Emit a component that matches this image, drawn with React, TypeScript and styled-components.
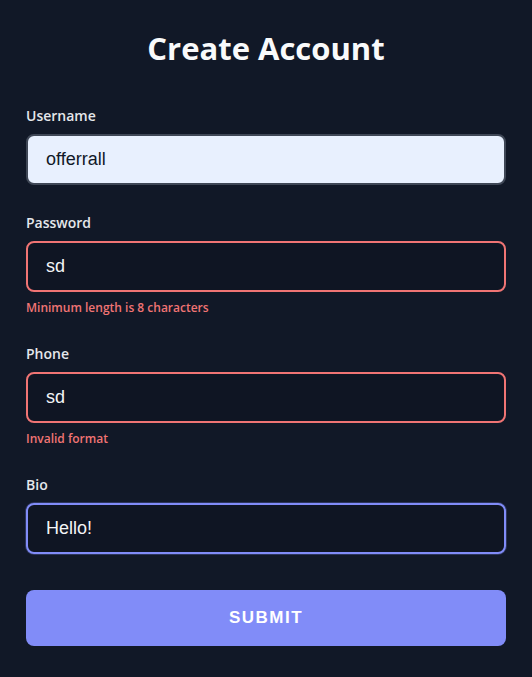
import React from 'react'
import styled, { createGlobalStyle } from 'styled-components'

const GlobalStyle = createGlobalStyle`
  html, body {
    margin: 0;
    padding: 0;
    background: #111827;
  }
  * {
    box-sizing: border-box;
  }
`

const Page = styled.div`
  display: flex;
  flex-direction: column;
  min-height: 677px;
  padding: 0 26px;
  background: #111827;
  font-family: 'Open Sans', 'Noto Sans', sans-serif;
`

const Title = styled.h1`
  margin: 28px 0 38px;
  color: #f9fafb;
  font-size: 31px;
  font-weight: 700;
  line-height: 40px;
  text-align: center;
`

const Form = styled.form`
  display: flex;
  flex-direction: column;
`

const Field = styled.div`
  display: flex;
  flex-direction: column;
  margin-bottom: 28px;
`

const Label = styled.label`
  margin-bottom: 8px;
  color: #e5e7eb;
  font-size: 14px;
  font-weight: 600;
  line-height: 20px;
`

const Input = styled.input<{ $state?: 'filled' | 'error' | 'focus' }>`
  width: 100%;
  height: 51px;
  padding: 0 18px;
  color: ${({ $state }) => ($state === 'filled' ? '#111827' : '#f3f4f6')};
  font-family: 'Liberation Sans', Arial, sans-serif;
  font-size: 18px;
  background: ${({ $state }) => ($state === 'filled' ? '#e8f0fe' : '#0f1523')};
  border: 2px solid
    ${({ $state }) =>
      $state === 'error' ? '#f07474' : $state === 'focus' ? '#818cf8' : '#3f4756'};
  border-radius: 8px;
  outline: none;
  box-shadow: ${({ $state }) =>
    $state === 'focus' ? '0 0 0 1px rgba(129, 140, 248, 0.25)' : 'none'};
`

const ErrorText = styled.span`
  margin-top: 8px;
  color: #f07474;
  font-size: 12px;
  font-weight: 600;
  line-height: 16px;
`

const SubmitButton = styled.button`
  height: 56px;
  margin-top: 8px;
  color: #ffffff;
  font-family: 'Liberation Sans', Arial, sans-serif;
  font-size: 17px;
  font-weight: 700;
  letter-spacing: 1.5px;
  text-transform: uppercase;
  background: #818cf8;
  border: none;
  border-radius: 8px;
  cursor: pointer;
`

interface FieldDef {
  label: string
  value: string
  state?: 'filled' | 'error' | 'focus'
  error?: string
}

const FIELDS: FieldDef[] = [
  { label: 'Username', value: 'offerrall', state: 'filled' },
  { label: 'Password', value: 'sd', state: 'error', error: 'Minimum length is 8 characters' },
  { label: 'Phone', value: 'sd', state: 'error', error: 'Invalid format' },
  { label: 'Bio', value: 'Hello!', state: 'focus' },
]

export default function App() {
  return (
    <Page>
      <GlobalStyle />
      <Title>Create Account</Title>
      <Form onSubmit={(e) => e.preventDefault()}>
        {FIELDS.map((field) => (
          <Field key={field.label}>
            <Label>{field.label}</Label>
            <Input $state={field.state} defaultValue={field.value} />
            {field.error && <ErrorText>{field.error}</ErrorText>}
          </Field>
        ))}
        <SubmitButton type="submit">Submit</SubmitButton>
      </Form>
    </Page>
  )
}
